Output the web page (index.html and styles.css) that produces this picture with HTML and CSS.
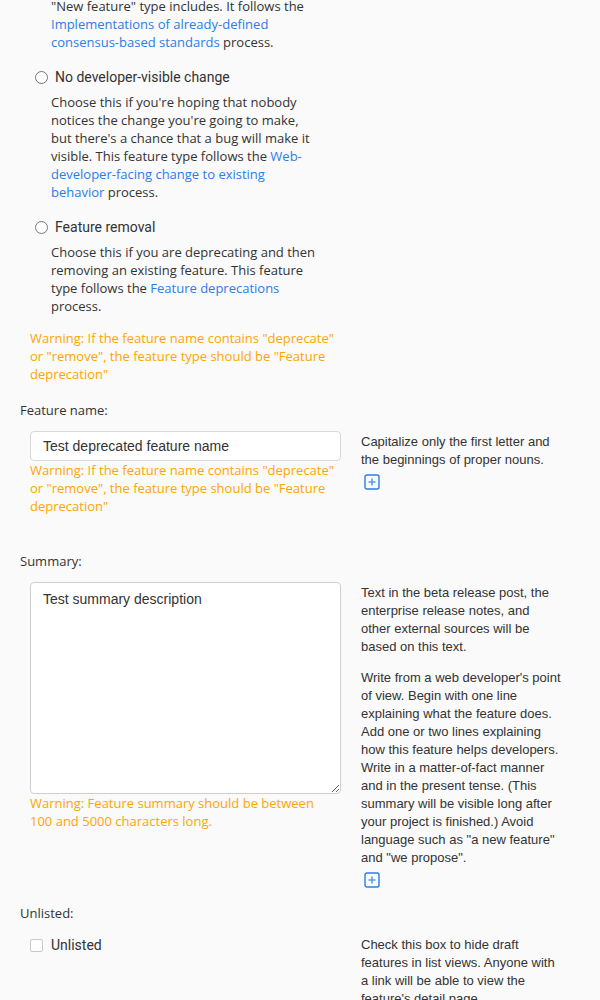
FILE: index.html
```html
<!DOCTYPE html>
<html lang="en">
<head>
<meta charset="utf-8">
<title>Feature form</title>
<link rel="stylesheet" href="styles.css">
</head>
<body>
<div class="page">
  <section class="type-group">
    <p class="desc intro">"New feature" type includes. It follows the <a href="#">Implementations of already-defined consensus-based standards</a> process.</p>
    <label class="radio"><input type="radio" name="type"><span>No developer-visible change</span></label>
    <p class="desc">Choose this if you're hoping that nobody notices the change you're going to make, but there's a chance that a bug will make it visible. This feature type follows the <a href="#">Web-developer-facing change to existing behavior</a> process.</p>
    <label class="radio"><input type="radio" name="type"><span>Feature removal</span></label>
    <p class="desc">Choose this if you are deprecating and then removing an existing feature. This feature type follows the <a href="#">Feature deprecations</a> process.</p>
    <p class="warning type-warning">Warning: If the feature name contains "deprecate" or "remove", the feature type should be "Feature deprecation"</p>
  </section>

  <div class="field-label">Feature name:</div>
  <div class="field-row row-name">
    <div class="field-main">
      <input class="text-input" type="text" value="Test deprecated feature name">
      <p class="warning">Warning: If the feature name contains "deprecate" or "remove", the feature type should be "Feature deprecation"</p>
    </div>
    <div class="help">
      <p>Capitalize only the first letter and the beginnings of proper nouns.</p>
      <span class="more"><svg width="16" height="16" viewBox="0 0 16 16"><rect x="1" y="1" width="14" height="14" rx="2" fill="none" stroke="#2b7de9" stroke-width="1.4"/><path d="M8 4.5v7M4.5 8h7" stroke="#5a9be8" stroke-width="1.6"/></svg></span>
    </div>
  </div>

  <div class="field-label label-summary">Summary:</div>
  <div class="field-row row-summary">
    <div class="field-main">
      <textarea class="text-area">Test summary description</textarea>
      <p class="warning">Warning: Feature summary should be between 100 and 5000 characters long.</p>
    </div>
    <div class="help">
      <p>Text in the beta release post, the enterprise release notes, and other external sources will be based on this text.</p>
      <p class="help-para">Write from a web developer's point of view. Begin with one line explaining what the feature does. Add one or two lines explaining how this feature helps developers. Write in a matter-of-fact manner and in the present tense. (This summary will be visible long after your project is finished.) Avoid language such as "a new feature" and "we propose".</p>
      <span class="more"><svg width="16" height="16" viewBox="0 0 16 16"><rect x="1" y="1" width="14" height="14" rx="2" fill="none" stroke="#2b7de9" stroke-width="1.4"/><path d="M8 4.5v7M4.5 8h7" stroke="#5a9be8" stroke-width="1.6"/></svg></span>
    </div>
  </div>

  <div class="field-label label-unlisted">Unlisted:</div>
  <div class="field-row row-unlisted">
    <div class="field-main">
      <label class="check"><input type="checkbox"><span>Unlisted</span></label>
    </div>
    <div class="help">
      <p>Check this box to hide draft features in list views. Anyone with a link will be able to view the feature's detail page.</p>
    </div>
  </div>
</div>
</body>
</html>
```
FILE: styles.css
```css
html, body {
  margin: 0;
  padding: 0;
  background: #fafafa;
}

body {
  font-family: "Open Sans", "DejaVu Sans", sans-serif;
  font-size: 13px;
  line-height: 18px;
  color: #333;
}

p {
  margin: 0;
}

a {
  color: #2b7de9;
  text-decoration: none;
}

.page {
  padding-left: 20px;
  overflow: hidden;
  height: 1000px;
}

.type-group {
  width: 311px;
  margin-left: 10px;
}

.desc {
  width: 270px;
  padding-left: 21px;
  margin-top: 7px;
}

.desc.intro {
  margin-top: -3px;
}

.radio {
  display: flex;
  align-items: center;
  margin-top: 17px;
  font-family: Roboto, "Liberation Sans", sans-serif;
  font-size: 14px;
  line-height: 18px;
  color: #333;
}

.radio input {
  margin: 0 7px 0 5px;
  width: 13px;
  height: 13px;
}

.warning {
  color: #ffa500;
  width: 306px;
}

.type-warning {
  margin-top: 14px;
}

.field-label {
  margin-top: 18px;
}

.label-summary {
  margin-top: 37px;
}

.label-unlisted {
  margin-top: 16px;
}

.field-row {
  display: grid;
  grid-template-columns: 311px 200.6px;
  column-gap: 20px;
  margin-left: 10px;
  margin-top: 12px;
  align-items: start;
}

.row-unlisted {
  margin-top: 14px;
}

.field-main {
  display: flex;
  flex-direction: column;
}

.text-input {
  box-sizing: border-box;
  width: 311px;
  height: 30px;
  margin: 0;
  padding: 0 12px;
  border: 1px solid #d9d9d9;
  border-radius: 4px;
  background: #fff;
  font-family: "Liberation Sans", Arial, sans-serif;
  font-size: 14px;
  color: #333;
  outline: none;
}

.text-area {
  box-sizing: border-box;
  width: 311px;
  height: 212px;
  margin: 0;
  padding: 7px 12px;
  border: 1px solid #cfcfcf;
  border-radius: 4px;
  background: #fff;
  font-family: "Liberation Sans", Arial, sans-serif;
  font-size: 14px;
  line-height: 18px;
  color: #333;
  outline: none;
  display: block;
}

.help {
  padding-top: 2px;
  font-family: "Liberation Sans", Arial, sans-serif;
  font-size: 13px;
  line-height: 18px;
  color: #333;
}

.row-unlisted .help {
  padding-top: 0;
}

.help-para {
  margin-top: 13px;
}

.more {
  display: block;
  width: 16px;
  height: 16px;
  margin: 5px 0 0 3px;
}

.more svg {
  display: block;
}

.check {
  display: flex;
  align-items: center;
  font-family: Roboto, "Liberation Sans", sans-serif;
  font-size: 14px;
  line-height: 18px;
  color: #333;
}

.check input {
  appearance: none;
  -webkit-appearance: none;
  box-sizing: border-box;
  width: 13px;
  height: 13px;
  margin: 0 8px 0 0;
  border: 1px solid #c9c9c9;
  border-radius: 2px;
  background: #fff;
}
```
